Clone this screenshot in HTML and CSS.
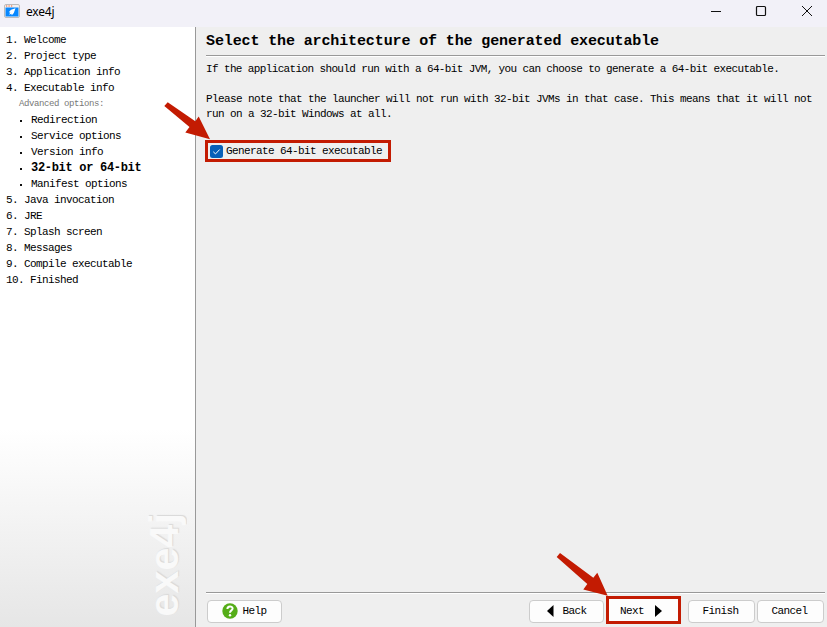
FILE: index.html
```html
<!DOCTYPE html>
<html lang="en">
<head>
<meta charset="utf-8">
<title>exe4j</title>
<link rel="stylesheet" href="styles.css">
</head>
<body>
<div class="window">
  <header class="titlebar">
    <svg class="app-icon" width="16" height="14" viewBox="0 0 16 14"><rect x=".5" y=".5" width="15" height="13" rx="1.500" fill="#f3efee" stroke="#bcbcbc"/><path d="M2 2h1.200M4.500 2h1.200M7 2h1.200" stroke="#f05a28" stroke-width="1.200"/><path d="M1.500 3.500h13v9h-13z" fill="#0788ff"/><path d="M11.500 4.300L7 5.700 4.800 8.200l1.500.3-1.200 2.200 2.200-1 .5 1.500 2-2.200z" fill="#fff"/></svg>
    <span class="app-name">exe4j</span>
    <svg class="controls" width="106" height="16" viewBox="0 0 106 16" fill="none" stroke="#111" stroke-width="1"><path d="M1 7.500h10"/><rect x="46.500" y="2.500" width="9" height="9" rx="1" stroke-width="1.200"/><path d="M92 2l10 10M102 2L92 12"/></svg>
  </header>
  <div class="body">
    <aside class="sidebar">
      <ol class="steps">
        <li><span class="num">1.</span>Welcome</li>
        <li><span class="num">2.</span>Project type</li>
        <li><span class="num">3.</span>Application info</li>
        <li><span class="num">4.</span>Executable info</li>
        <li class="caption">Advanced options:</li>
        <li class="sub">Redirection</li>
        <li class="sub">Service options</li>
        <li class="sub">Version info</li>
        <li class="sub current">32-bit or 64-bit</li>
        <li class="sub">Manifest options</li>
        <li><span class="num">5.</span>Java invocation</li>
        <li><span class="num">6.</span>JRE</li>
        <li><span class="num">7.</span>Splash screen</li>
        <li><span class="num">8.</span>Messages</li>
        <li><span class="num">9.</span>Compile executable</li>
        <li><span class="num wide">10.</span>Finished</li>
      </ol>
      <div class="brand">exe4j</div>
    </aside>
    <main class="main">
      <h1>Select the architecture of the generated executable</h1>
      <div class="content">
        <p>If the application should run with a 64-bit JVM, you can choose to generate a 64-bit executable.</p>
        <p>Please note that the launcher will not run with 32-bit JVMs in that case. This means that it will not<br>run on a 32-bit Windows at all.</p>
        <label class="option"><svg width="13" height="13" viewBox="0 0 13 13"><rect width="13" height="13" rx="2.500" fill="#0860b8"/><path d="M3.300 6.800l2.200 2.100 4.200-4.400" fill="none" stroke="#fff"/></svg>Generate 64-bit executable</label>
      </div>
      <footer class="footer">
        <button class="help"><svg width="16" height="16" viewBox="0 0 16 16"><circle cx="8" cy="8" r="7.700" fill="#55ad18"/><path d="M5.400 6c0-3.400 5.200-3.200 5.200-.4C10.600 7.500 8 7.300 8 9.700" fill="none" stroke="#fff" stroke-width="2"/><circle cx="8" cy="12.200" r="1.200" fill="#fff"/></svg><span>Help</span></button>
        <button class="back"><svg width="7" height="12" viewBox="0 0 7 12"><path d="M6.500 0v12L0 6z"/></svg><span>Back</span></button>
        <button class="next"><span>Next</span><svg width="7" height="12" viewBox="0 0 7 12"><path d="M0 0v12L7 6z"/></svg></button>
        <button class="finish"><span>Finish</span></button>
        <button class="cancel"><span>Cancel</span></button>
      </footer>
    </main>
  </div>
  <svg class="arrows" width="827" height="627" viewBox="0 0 827 627" fill="#c31b02"><path d="M167.700 102.300L195.300 121.300 198.700 116.500 210 139.300 185.300 132.600 189.500 126.900 164.300 106z"/><path d="M560 553L593.300 577.700 597.300 572.700 607.700 595.700 583.300 589.500 587.300 584 556.700 557z"/></svg>
</div>
</body>
</html>
```
FILE: styles.css
```css
* { box-sizing: border-box; }
body { margin: 0; }
.window {
  position: relative;
  display: flex;
  flex-direction: column;
  width: 827px;
  height: 627px;
  overflow: hidden;
  background: #efefef;
  color: #000;
  font: 11px/16px "Liberation Mono", monospace;
  letter-spacing: -0.6px;
}
.titlebar {
  display: flex;
  height: 27px;
  padding: 4px 11px 0 4px;
  background: #f2f1f8;
}
.app-icon { flex: none; }
.app-name {
  margin-left: 6px;
  font: 12px/16px "Noto Sans", sans-serif;
  letter-spacing: -0.2px;
}
.controls { margin-left: auto; }
.body { display: flex; flex: 1; }
.sidebar {
  display: flex;
  flex-direction: column;
  justify-content: space-between;
  width: 196px;
  padding: 5px 0 10px 6px;
  border-right: 1px solid #999;
  background: linear-gradient(#fff 67%, #e6e6e6);
}
.steps { margin: 0; padding: 0; list-style: none; }
.steps li { height: 16px; white-space: pre; }
.num { display: inline-block; width: 18px; }
.wide { width: 24px; }
.steps .caption {
  padding-left: 13px;
  color: #777;
  font-size: 9px;
  letter-spacing: -0.4px;
}
.sub { display: flex; align-items: center; padding-left: 14px; }
.sub::before {
  width: 2px;
  height: 2px;
  margin: 2px 9px 0 0;
  background: #111;
  content: "";
}
.steps .current { font-weight: bold; font-size: 12px; letter-spacing: -0.3px; }
.brand {
  align-self: flex-end;
  margin-right: 11px;
  writing-mode: vertical-rl;
  transform: rotate(180deg);
  color: #f9f9f9;
  font: bold 41px/40px "Liberation Sans", sans-serif;
  letter-spacing: 0.2px;
  text-shadow: 1px 1px 1px #d8d8d8;
}
.main {
  display: flex;
  flex: 1;
  flex-direction: column;
  padding: 0 2px 0 10px;
}
h1 {
  height: 29px;
  margin: 0;
  border-bottom: 1px solid #999;
  box-shadow: 0 1px #fff;
  font-size: 15px;
  line-height: 30px;
  letter-spacing: -0.12px;
}
.content { flex: 1; padding-top: 6px; }
p { margin: 0 0 15px; line-height: 15px; white-space: nowrap; }
p:first-child { letter-spacing: -0.63px; }
.option {
  display: flex;
  align-items: center;
  gap: 3px;
  width: 186px;
  height: 22px;
  margin: 18px 0 0 -1px;
  padding-left: 2px;
  border: 3px solid #c31b02;
}
.footer {
  display: flex;
  height: 35px;
  padding: 7px 1px 0 1px;
  border-top: 1px solid #999;
  box-shadow: inset 0 1px #fff;
}
button {
  display: flex;
  align-items: center;
  justify-content: center;
  height: 23px;
  padding: 0;
  border: 1px solid #ccc;
  border-radius: 4px;
  background: #fdfdfd;
  color: #000;
  font: inherit;
  letter-spacing: inherit;
}
button span { padding-bottom: 1px; }
.help { width: 75px; gap: 4px; margin-right: auto; }
.help svg { margin-top: -1px; }
.back { width: 75px; gap: 8px; margin-right: 2px; padding-left: 1px; }
.back svg { margin-top: -1px; }
.next {
  width: 75px;
  height: 28px;
  gap: 11px;
  margin: -4px 7px 0 0;
  padding: 2px 5px 0 0;
  border: 3px solid #c31b02;
  border-radius: 0;
}
.next span { padding-bottom: 0; }
.finish { width: 67px; margin-right: 2px; padding-right: 2px; }
.cancel { width: 67px; padding-right: 2px; }
.arrows { position: absolute; inset: 0; pointer-events: none; }
```
